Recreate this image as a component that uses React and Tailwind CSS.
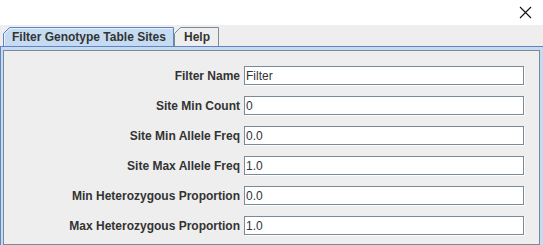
import React from 'react'

const fields = [
  { label: 'Filter Name', value: 'Filter' },
  { label: 'Site Min Count', value: '0' },
  { label: 'Site Min Allele Freq', value: '0.0' },
  { label: 'Site Max Allele Freq', value: '1.0' },
  { label: 'Min Heterozygous Proportion', value: '0.0' },
  { label: 'Max Heterozygous Proportion', value: '1.0' },
]

function Tab({ label, selected, width }) {
  // metal-style tab with the clipped top-left corner
  const stroke = selected ? '#6382bf' : '#7a8a99'
  const fill = selected ? '#c5dbf1' : '#eeeeee'
  return (
    <div className="relative h-[19px] flex items-center" style={{ width }}>
      <svg className="absolute inset-0" width={width} height="19">
        <path d={`M0.5 19 V6.5 L6.5 0.5 H${width - 0.5} V19`} fill={fill} stroke={stroke} />
        {selected && <path d={`M1.5 19 V7 L7 1.5 H${width - 1.5}`} fill="none" stroke="#ffffff" strokeOpacity="0.6" />}
      </svg>
      <span className={`relative w-full text-[12px] font-bold text-[#333333] leading-none ${selected ? 'pl-[9px]' : 'pl-[10px]'}`}>{label}</span>
    </div>
  )
}

export default function App() {
  return (
    <div className="w-[543px] h-[245px] overflow-hidden bg-[#eeeeee] font-['Liberation_Sans',Arial,sans-serif]">
      <div className="h-[25px] bg-white flex justify-end items-center pr-[11px]">
        <svg width="13" height="13" viewBox="0 0 13 13">
          <path d="M1 1 L12 12 M12 1 L1 12" stroke="#111111" strokeWidth="1.1" fill="none" />
        </svg>
      </div>
      <div className="h-[21px] flex items-end pl-[3px]">
        <Tab label="Filter Genotype Table Sites" selected width={171} />
        <Tab label="Help" width={45} />
      </div>
      <div className="border-t border-l border-[#6382bf] bg-[#c5dbf1] pt-[3px] pl-[2px] pr-[3px] h-[199px]">
        <div className="border border-[#7a8a99] bg-[#eeeeee] h-full flex flex-col items-end gap-[11px] pt-[15px] pr-[15px]">
          {fields.map((f) => (
            <div key={f.label} className="flex items-center gap-[4px]">
              <span className="text-[12px] font-bold text-[#333333] leading-none">{f.label}</span>
              <div className="w-[280px] h-[19px] border border-[#7a8a99] bg-white shadow-[1px_1px_0_#ffffff] flex items-center pl-[1px] text-[12px] text-[#333333] leading-none">
                {f.value}
              </div>
            </div>
          ))}
        </div>
      </div>
    </div>
  )
}
